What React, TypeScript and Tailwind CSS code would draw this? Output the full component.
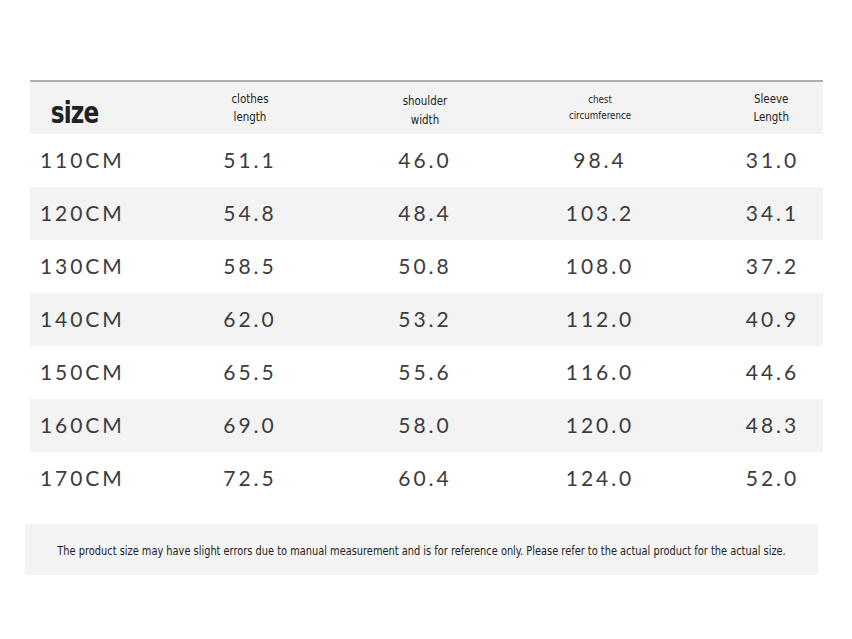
const ROWS = [
  ["110CM", "51.1", "46.0", "98.4", "31.0"],
  ["120CM", "54.8", "48.4", "103.2", "34.1"],
  ["130CM", "58.5", "50.8", "108.0", "37.2"],
  ["140CM", "62.0", "53.2", "112.0", "40.9"],
  ["150CM", "65.5", "55.6", "116.0", "44.6"],
  ["160CM", "69.0", "58.0", "120.0", "48.3"],
  ["170CM", "72.5", "60.4", "124.0", "52.0"],
];

const GRID = "grid grid-cols-[120px_200px_150px_200px_1fr] items-center";
const COND = "font-['DejaVu_Sans_Condensed','Liberation_Sans_Narrow',sans-serif]";
const NUM = "font-['Lato','DejaVu_Sans',sans-serif] font-normal text-[21px] tracking-[0.14em] text-[#3c3c3c]";

export default function App() {
  return (
    <div className="w-[852px] h-[639px] bg-white pt-[80px]">
      <div className="ml-[30px] w-[793px]">
        <div className="h-[2px] bg-[#b0b0b0]" />
        {/* header */}
        <div className={`${GRID} h-[52px] bg-[#f3f3f3] ${COND} text-[#222]`}>
          <div className="pl-[24px] pt-[10px] text-[30px] font-bold leading-none tracking-[-0.03em] scale-x-[0.86] origin-left">
            size
          </div>
          <div className="text-center text-[13px] leading-[18px] scale-x-[0.88]">
            clothes
            <br />
            length
          </div>
          <div className="text-center text-[13px] leading-[19px] pt-[3px] scale-x-[0.88]">
            shoulder
            <br />
            width
          </div>
          <div className="text-center text-[11px] leading-[16px] scale-x-[0.88]">
            chest
            <br />
            circumference
          </div>
          <div className="pl-[22px] text-center text-[13px] leading-[18px] font-medium scale-x-[0.88]">
            Sleeve
            <br />
            Length
          </div>
        </div>
        {ROWS.map((r, i) => (
          <div
            key={r[0]}
            className={`${GRID} h-[53px] ${NUM} ${i % 2 === 1 ? "bg-[#f3f3f3]" : "bg-white"}`}
          >
            <div className="pl-[10px] pb-[2px]">{r[0]}</div>
            <div className="text-center pb-[2px]">{r[1]}</div>
            <div className="text-center pb-[2px]">{r[2]}</div>
            <div className="text-center pb-[2px]">{r[3]}</div>
            <div className="pl-[22px] text-center pb-[2px]">{r[4]}</div>
          </div>
        ))}
      </div>
      <div
        className={`ml-[25px] mt-[19px] w-[793px] h-[51px] bg-[#f4f4f4] flex items-center justify-center ${COND} text-[13px] text-[#222]`}
      >
        <span className="scale-x-[0.84] whitespace-nowrap pt-[2px]">
          The product size may have slight errors due to manual measurement and is for reference only. Please refer to the actual product for the actual size.
        </span>
      </div>
    </div>
  );
}
